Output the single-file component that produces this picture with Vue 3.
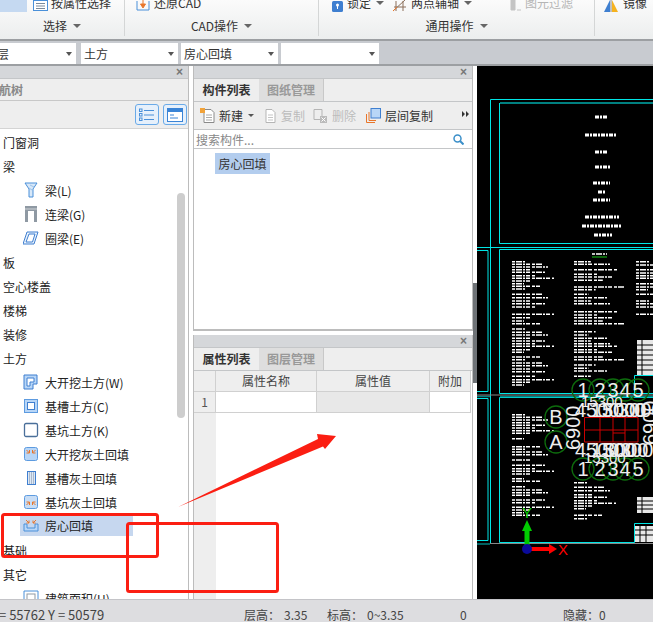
<template>
  <div class="app">
    <header class="ribbon">
      <section class="group g-select">
        <div class="group-top">
          <span class="sel-block"></span>
          <svg class="top-icon" width="15" height="12" viewBox="0 0 15 12"><rect x="0.5" y="0.5" width="14" height="10" fill="#fff" stroke="#4a90d9"/><path d="M3 3.5h9M3 6h9M3 8.5h9" stroke="#7a8a9a"/></svg>
          <span class="top-text">按属性选择</span>
        </div>
        <div class="group-label">选择<i class="caret"></i></div>
      </section>
      <section class="group g-cad">
        <div class="group-top">
          <svg class="top-icon" width="14" height="12" viewBox="0 0 14 12"><path d="M1 1v9h12V1" fill="none" stroke="#4a90d9"/><path d="M7 0v6M4.5 4L7 8l2.5-4z" fill="#e8762b" stroke="#e8762b"/></svg>
          <span class="top-text">还原CAD</span>
        </div>
        <div class="group-label">CAD操作<i class="caret"></i></div>
      </section>
      <section class="group g-common">
        <div class="group-top">
          <svg class="top-icon lock" width="11" height="11" viewBox="0 0 11 11"><rect width="11" height="11" rx="1.5" fill="#3f7fd0"/><circle cx="5.5" cy="4" r="1.5" fill="#fff"/><path d="M5.5 4v4" stroke="#fff"/></svg>
          <span class="top-text">锁定</span><i class="caret small"></i>
          <svg class="top-icon axis" width="15" height="13" viewBox="0 0 15 13"><path d="M1 12L13 1M4 12V2M11 12V2M2 8h12" fill="none" stroke="#8b6f5a"/><path d="M1 12l4-4" stroke="#e8762b"/></svg>
          <span class="top-text">两点辅轴</span><i class="caret small"></i>
          <svg class="top-icon filter" width="11" height="12" viewBox="0 0 11 12"><path d="M1 0h4v10H1zM7 10h4" fill="#c4c4c4" stroke="#c4c4c4"/></svg>
          <span class="top-text off">图元过滤</span>
        </div>
        <div class="group-label">通用操作<i class="caret"></i></div>
      </section>
      <section class="group g-mirror">
        <div class="group-top">
          <svg class="top-icon" width="15" height="12" viewBox="0 0 15 12"><path d="M6 0L0 12h6z" fill="#3f7fd0"/><path d="M8 0l6 12H8z" fill="#f5b21f"/><path d="M7 0v12" stroke="#888"/></svg>
          <span class="top-text">镜像</span>
        </div>
      </section>
    </header>

    <div class="selectors">
      <div v-for="c in combos" :key="c.cls" :class="['combo', c.cls]">
        <span>{{ c.text }}</span><i class="caret dark"></i>
      </div>
    </div>

    <main class="workspace">
      <aside class="nav-panel">
        <div class="panel-title"><span class="close">×</span></div>
        <div class="nav-head">航树</div>
        <div class="nav-tools">
          <button class="view-btn">
            <svg width="16" height="14" viewBox="0 0 16 14"><path d="M5 2.5h10M5 7h10M5 11.5h10" stroke="#4a90d9"/><rect x="0.5" y="1" width="2.5" height="2.5" fill="none" stroke="#4a90d9"/><rect x="0.5" y="5.5" width="2.5" height="2.5" fill="none" stroke="#4a90d9"/><rect x="0.5" y="10" width="2.5" height="2.5" fill="none" stroke="#4a90d9"/></svg>
          </button>
          <button class="view-btn">
            <svg width="16" height="14" viewBox="0 0 16 14"><rect x="0.5" y="0.5" width="15" height="13" fill="#fff" stroke="#3a84d6"/><rect x="0.5" y="0.5" width="15" height="3.5" fill="#3a84d6"/><path d="M3 7h4M3 10h8" stroke="#3a84d6"/></svg>
          </button>
        </div>
        <div class="tree">
          <div v-for="row in tree" :key="row.text" :class="['tree-row', { child: row.icon, picked: row.picked }]">
            <svg v-if="row.icon" class="tree-icon" width="16" height="16" viewBox="0 0 16 16" v-html="icons[row.icon]"></svg>
            <span class="tree-text">{{ row.text }}</span>
          </div>
          <span class="scroll-thumb"></span>
        </div>
      </aside>

      <div class="mid">
        <section class="panel list-panel">
          <div class="panel-title"><span class="close">×</span></div>
          <div class="tabs">
            <span class="tab active">构件列表</span>
            <span class="tab">图纸管理</span>
          </div>
          <div class="tools">
            <svg class="tool-icon" width="16" height="15" viewBox="0 0 16 15"><path d="M4 1.5h7l3 3v10H4z" fill="#fff" stroke="#8a8a8a"/><path d="M6 7h6M6 9.5h6M6 12h6" stroke="#aaa"/><rect x="0" y="0" width="5" height="5" fill="#f2a33a"/></svg>
            <span class="tool-text">新建</span><i class="caret dark tiny"></i>
            <svg class="tool-icon faded" width="13" height="14" viewBox="0 0 13 14"><path d="M3 .5h6l3 3v10H3z" fill="#fff" stroke="#b5b5b5"/><path d="M5 6h5M5 8.500h5M5 11h5" stroke="#c5c5c5"/></svg>
            <span class="tool-text off">复制</span>
            <svg class="tool-icon faded" width="14" height="14" viewBox="0 0 14 14"><path d="M1 .5h8v10H1z" fill="none" stroke="#b5b5b5"/><rect x="7" y="7" width="7" height="7" fill="#bbb"/><path d="M8.500 8.500l4 4m0-4l-4 4" stroke="#fff"/></svg>
            <span class="tool-text off wide">删除</span>
            <svg class="tool-icon copy" width="15" height="15" viewBox="0 0 15 15"><path d="M.5 6v8.500H9M3 4v8.500h7" fill="none" stroke="#e8762b"/><rect x="5" y=".5" width="9.500" height="9.500" fill="#b8d6f7" stroke="#3f7fd0"/></svg>
            <span class="tool-text">层间复制</span>
            <span class="more">
              <svg width="7" height="6" viewBox="0 0 7 6"><path d="M0 0l3 3-3 3zM4 0l3 3-3 3z" fill="#333"/></svg>
            </span>
          </div>
          <div class="search">
            <span>搜索构件...</span>
            <svg width="11" height="11" viewBox="0 0 11 11"><circle cx="4.500" cy="4.500" r="3.500" fill="none" stroke="#3b8fc9" stroke-width="1.500"/><path d="M7 7l3.500 3.500" stroke="#3b8fc9" stroke-width="2"/></svg>
          </div>
          <div class="list-body">
            <span class="list-item">房心回填</span>
          </div>
        </section>

        <section class="panel attr-panel">
          <div class="panel-title"><span class="close">×</span></div>
          <div class="tabs">
            <span class="tab active">属性列表</span>
            <span class="tab">图层管理</span>
          </div>
          <div class="attr-body">
            <div class="attr-grid">
              <div class="cell head"></div>
              <div class="cell head">属性名称</div>
              <div class="cell head">属性值</div>
              <div class="cell head">附加</div>
              <div class="cell head num">1</div>
              <div class="cell"></div>
              <div class="cell shade"></div>
              <div class="cell"></div>
            </div>
          </div>
        </section>
      </div>

      <div class="splitter"><span class="grip"></span></div>

      <svg class="canvas" width="176" height="533" viewBox="477 66 176 533">
        <rect x="477" y="66" width="176" height="533" fill="#000" />
        <g fill="none" stroke="#00e5e5">
          <path d="M490.500 99.500H653M490.500 99.500V543" />
          <path d="M499.500 103V243.500H653" />
          <path d="M477 247.500H653" />
          <path d="M477 250.500H488V391.500H477" />
          <path d="M653 249.500H499.500V393.500H653" />
          <path d="M477 398.500H488V540.500H477" />
          <path d="M653 397.500H499.500V542.500H634.500V523.500H653" />
          <path d="M634.500 393V375.500H653" />
        </g>
        <path d="M500 103H653" stroke="#008080" stroke-width="2" />
        <path d="M500 396.500H653M477 396.500H490M477 544H490" stroke="#008080" stroke-width="1.500" />
        <path d="M477 395H653M490 543.500H653" stroke="#888" stroke-width="1" />

        <g stroke="#fff" stroke-width="3" stroke-dasharray="4 1 2 1" fill="none">
          <path v-for="(b, i) in titleBlocks" :key="'b' + i" :d="b" />
        </g>
        <g stroke="#fff" stroke-width="1.500" stroke-dasharray="3 1 6 1 2 1 4 2" fill="none">
          <path v-for="(b, i) in noteBlocks" :key="'n' + i" :d="b" />
        </g>
        <path d="M592 257H607" stroke="#19c819" stroke-width="1" />

        <g fill="#e8e8e8">
          <rect v-for="(t, i) in tables" :key="'t' + i" :x="t[0]" :y="t[1]" :width="t[2]" :height="t[3]" />
        </g>
        <g stroke="#000" stroke-width="1">
          <path d="M637 345H653M637 350H653M637 355H653M637 360H653M637 365H653M637 370H653M642 340V375" />
          <path d="M637 501H653M637 505H653M637 509H653M642 497V513M635 530H653M635 535H653M640 526V542M646 526V542" />
        </g>

        <g fill="none" stroke="#cc0000" stroke-width="1">
          <path d="M584.500 417.500H638V442H584.500zM584.500 430H638M600 417.500V442M613 417.500V442M625 417.500V442M613 433H625" />
        </g>

        <g fill="none" stroke="#0d6b0d" stroke-width="1.300">
          <circle v-for="(c, i) in bubbles" :key="'c' + i" :cx="c[0]" :cy="c[1]" r="11" />
        </g>
        <g class="cad-text">
          <text v-for="(c, i) in bubbles" :key="'t' + i" :x="c[0]" :y="c[1] + 7" text-anchor="middle">{{ c[2] }}</text>
          <text x="575" y="417">4500</text>
          <text x="591" y="417">1500</text>
          <text x="602" y="417">3000</text>
          <text x="618" y="417">3000</text>
          <text x="634" y="417">0</text>
          <text x="581" y="407" class="mid-size">15300</text>
          <text x="575" y="457">4500</text>
          <text x="591" y="457">1500</text>
          <text x="604" y="457">3000</text>
          <text x="620" y="457">3000</text>
          <text x="584" y="463" class="mid-size">15300</text>
          <text x="0" y="0" transform="translate(580 450) rotate(-90)">6900</text>
          <text x="0" y="0" transform="translate(657 445) rotate(-90)">6900</text>
        </g>

        <path d="M530 549H550" stroke="#f00" stroke-width="4" />
        <path d="M549 544L557 549L549 554z" fill="#f00" />
        <path d="M527 546V530" stroke="#0c0" stroke-width="5" />
        <path d="M522 531L527 520L532 531z" fill="#0c0" />
        <circle cx="527" cy="549" r="5" fill="#0a0a9a" />
        <text x="522" y="518" class="axis-y">Y</text>
        <text x="558" y="555" class="axis-x">X</text>
      </svg>
    </main>

    <footer class="status">
      <span class="s-pos">= 55762 Y = 50579</span>
      <span class="s-a">层高：</span>
      <span class="s-b">3.35</span>
      <span class="s-c">标高：</span>
      <span class="s-d">0~3.35</span>
      <span class="s-e">0</span>
      <span class="s-f">隐藏：0</span>
    </footer>

    <svg class="marks" width="653" height="622" viewBox="0 0 653 622">
      <g fill="none" stroke="#fb1e12" stroke-width="3" stroke-linejoin="round">
        <rect x="2.500" y="514.500" width="155" height="42" rx="2" />
        <rect x="127.500" y="523.500" width="150" height="68" rx="2" />
      </g>
      <polygon points="178,507 318,439 317,434 336,436 325,449 323,446.500" fill="#fb1e12" />
    </svg>
  </div>
</template>

<script setup>
const combos = [
  { cls: 'c1', text: '层' },
  { cls: 'c2', text: '土方' },
  { cls: 'c3', text: '房心回填' },
  { cls: 'c4', text: '' },
]

const tree = [
  { text: '门窗洞' },
  { text: '梁' },
  { text: '梁(L)', icon: 'beam' },
  { text: '连梁(G)', icon: 'lintel' },
  { text: '圈梁(E)', icon: 'ring' },
  { text: '板' },
  { text: '空心楼盖' },
  { text: '楼梯' },
  { text: '装修' },
  { text: '土方' },
  { text: '大开挖土方(W)', icon: 'dig' },
  { text: '基槽土方(C)', icon: 'trench' },
  { text: '基坑土方(K)', icon: 'pit' },
  { text: '大开挖灰土回填', icon: 'fillDown' },
  { text: '基槽灰土回填', icon: 'dots' },
  { text: '基坑灰土回填', icon: 'fillUp' },
  { text: '房心回填', icon: 'tray', picked: true },
  { text: '基础' },
  { text: '其它' },
  { text: '建筑面积(U)', icon: 'area' },
]

const icons = {
  beam: '<path d="M2 1h12L10 7v8H6V7z" fill="#d8e8f8" stroke="#4a90d9"/><path d="M7 3l4 2M6 6l3 2" stroke="#9cc2ea"/>',
  lintel: '<path d="M2 0h12v16h-3V5H5v11H2z" fill="#8f99a3"/><path d="M2 3h12" stroke="#d0d4d8"/>',
  ring: '<path d="M4 2h11l-4 12H0z" fill="#eaf3fc" stroke="#3f7fd0"/><path d="M6 4h6l-2.500 8H3z" fill="#fff" stroke="#3f7fd0"/>',
  dig: '<path d="M1 1h13v9h-4v5H1z" fill="#b8d6f7" stroke="#3f7fd0"/><path d="M4 4h7v4H7v4H4z" fill="#fff" stroke="#3f7fd0"/>',
  trench: '<rect x="1.500" y="1.500" width="13" height="13" fill="#b8d6f7" stroke="#5d9be0"/><rect x="4.500" y="4.500" width="7" height="7" fill="#fff" stroke="#3f7fd0"/>',
  pit: '<rect x="1.500" y="1.500" width="13" height="13" rx="1.500" fill="#fff" stroke="#4a6f9a" stroke-width="1.300"/>',
  fillDown: '<rect x="1.500" y="1.500" width="13" height="13" rx="2" fill="#b8d6f7" stroke="#5d9be0"/><path d="M3.500 4l3 3m0-3v3h-3M12.500 4l-3 3m0-3v3h3" fill="none" stroke="#e8762b"/>',
  dots: '<rect x="4.500" y="1.500" width="8" height="13" fill="#dce8f6" stroke="#3f7fd0"/><path d="M6 3h5M6 5h5M6 7h5M6 9h5M6 11h5M6 13h5" stroke="#7a8aa0" stroke-dasharray="1 1"/>',
  fillUp: '<rect x="1.500" y="1.500" width="13" height="13" rx="2" fill="#c8ddf5" stroke="#5d9be0"/><path d="M3.500 11l3-3m0 3V8h-3M12.500 11l-3-3m0 3V8h3" fill="none" stroke="#e8762b"/>',
  tray: '<path d="M1 6v7h14V6h-3v4H4V6z" fill="#b8d6f7" stroke="#4a90d9"/><path d="M3 2l3 3m0-2.500V5H3.500M13 2l-3 3m0-2.500V5h2.500" fill="none" stroke="#e8762b"/>',
  area: '<path d="M1 1h14M1 1v14M15 1v14" fill="none" stroke="#4a90d9"/><rect x="4" y="4" width="8" height="8" fill="none" stroke="#8f99a3"/>',
}

// title sheet lines, then the note columns of the two sheets below
const titleBlocks = [
  [595, 117, 13], [585, 135, 32], [595, 152, 13], [595, 167, 16], [593, 183, 17],
  [598, 192, 8], [593, 200, 17], [585, 217, 34], [582, 226, 40], [594, 235, 18],
].map(([x, y, w]) => `M${x} ${y}h${w}`)

const sheet2Left = [50, 58, 66, 74, 82, 92, 100, 108, 116, 124, 132, 148, 158, 168, 176, 186, 208, 218, 228, 236, 252, 262, 270, 280, 288, 296, 304, 314, 322, 336, 344, 354, 362, 372, 380, 394, 404, 412, 420]
const sheet2Mid = [50, 58, 74, 88, 96, 106, 126, 134, 148, 158, 168, 176, 200, 210, 218, 228, 236, 260, 270, 280, 288, 296, 304, 314, 322, 336, 344, 360, 370, 378, 394]
const sheet2Right = [50, 60, 74, 84, 92, 100, 116, 126, 134, 148, 168, 176, 186, 208]
const sheet3Left = [104, 112, 120, 128, 136, 144, 152, 160, 176, 200, 208, 216, 224, 240, 256, 266, 274, 282, 296, 304, 320, 330, 338, 346, 360, 368, 382, 390, 398, 406]
const sheet3Mid = [308, 322, 332, 344, 352, 362, 370, 378, 386, 406, 416]

const widths = [14, 30, 36, 20, 33, 24, 42, 18, 12, 28]
const noteBlocks = ['M592 254h15']
function addColumn(rows, x, top, scale) {
  rows.forEach((r, i) => {
    noteBlocks.push(`M${x} ${top + r / 3}h${widths[i % widths.length] * scale}`)
  })
}
addColumn(sheet2Left, 512, 245, 1)
addColumn(sheet2Mid, 574, 245, 1.200)
addColumn(sheet2Right, 636, 245, 1)
addColumn(sheet3Left, 512, 380, 1)
addColumn(sheet3Mid, 574, 380, 1)

const tables = [
  [637, 340, 16, 35],
  [637, 497, 16, 16],
  [635, 526, 18, 16],
]

const bubbles = [
  [583, 390, '1'], [600, 390, '2'], [613, 390, '3'], [625, 390, '4'], [638, 390, '5'],
  [583, 469, '1'], [600, 469, '2'], [613, 469, '3'], [625, 469, '4'], [638, 469, '5'],
  [556, 417, 'B'], [556, 442, 'A'],
]
</script>

<style>
html, body { margin: 0; overflow: hidden; background: #fff; }
</style>

<style scoped>
.app {
  position: relative;
  width: 653px;
  height: 622px;
  overflow: hidden;
  display: flex;
  flex-direction: column;
  font-family: "Noto Sans CJK SC", "Noto Sans", sans-serif;
  font-size: 12px;
  color: #333;
  background: #fff;
}

/* ribbon */
.ribbon {
  display: flex;
  height: 39px;
  flex: none;
  background: linear-gradient(#fbfbfb, #eceeee);
  border-bottom: 2px solid #9c9fa2;
  box-sizing: content-box;
}
.group {
  display: flex;
  flex-direction: column;
  height: 36px;
  box-sizing: border-box;
  border-right: 1px solid #d4d6d6;
}
.g-select { width: 125px; }
.g-cad { width: 194px; }
.g-common { width: 276px; }
.g-mirror { flex: 1; border-right: none; }
.group-top {
  display: flex;
  align-items: flex-end;
  height: 12px;
  overflow: hidden;
}
.sel-block {
  width: 27px;
  height: 14px;
  background: #c5d9f1;
  margin-right: 6px;
  flex: none;
}
.top-icon { flex: none; }
.top-text {
  flex: none;
  line-height: 18px;
  margin-left: 4px;
  white-space: nowrap;
  font-size: 12px;
}
.top-text.off { color: #b5b5b5; }
.g-select .top-text { margin-left: 3px; }
.g-cad .group-top { padding-left: 11px; }
.g-common .group-top { padding-left: 13px; }
.g-common .axis { margin-left: 8px; }
.g-common .filter { margin-left: 38px; }
.g-mirror .group-top { padding-left: 9px; }
.group-label {
  height: 20px;
  margin-top: 4px;
  display: flex;
  justify-content: center;
  align-items: center;
  font-size: 12px;
  line-height: 20px;
}
.caret {
  display: inline-block;
  width: 0;
  height: 0;
  margin-left: 6px;
  border-left: 4px solid transparent;
  border-right: 4px solid transparent;
  border-top: 4px solid #666;
}
.caret.small { margin: 0 0 7px 5px; }
.caret.dark { border-left-width: 3.500px; border-right-width: 3.500px; border-top-color: #555; }
.caret.tiny { margin: 0 9px 0 -3px; border-top-width: 3px; border-left-width: 3px; border-right-width: 3px; }

/* selector row */
.selectors {
  display: flex;
  flex: none;
  height: 25px;
  box-sizing: border-box;
  padding: 2px 0 0;
  background: #c8cbd0;
  border-bottom: 2px solid #9c9fa2;
}
.combo {
  height: 21px;
  background: #fff;
  display: flex;
  justify-content: space-between;
  align-items: center;
  box-sizing: border-box;
  padding: 0 4px;
  margin-right: 3px;
  font-size: 12px;
  flex: none;
}
.c1 { width: 79px; padding-left: 0; margin-left: -3px; margin-right: 5px; }
.c2 { width: 97px; padding-left: 3px; }
.c3 { width: 97px; padding-left: 3px; }
.c4 { width: 98px; }

/* panels */
.workspace {
  flex: none;
  display: flex;
  height: 533px;
  background: #fff;
}
.panel-title {
  height: 12px;
  background: #d5d7da;
  border-bottom: 1px solid #c4c6c8;
  position: relative;
  flex: none;
}
.close {
  position: absolute;
  right: 5px;
  top: -2px;
  font: bold 12px/16px "Liberation Sans", sans-serif;
  color: #777;
}
.nav-panel {
  width: 189px;
  flex: none;
  display: flex;
  flex-direction: column;
  border-right: 1px solid #bcbcbc;
  box-sizing: border-box;
  overflow: hidden;
}
.nav-head {
  height: 21px;
  flex: none;
  background: #eee;
  border-bottom: 1px solid #c8c8c8;
  margin-left: -1px;
  line-height: 21px;
  font-weight: 700;
  color: #888;
  font-size: 12px;
}
.nav-tools {
  height: 27px;
  flex: none;
  display: flex;
  justify-content: flex-end;
  align-items: center;
  gap: 4px;
  padding-right: 1px;
  background: #eee;
  border-bottom: 1px solid #d4d4d4;
}
.view-btn {
  width: 24px;
  height: 21px;
  padding: 0;
  background: #e6f0fb;
  border: 1px solid #6aaae8;
  border-radius: 3px;
  display: flex;
  align-items: center;
  justify-content: center;
}
.tree {
  position: relative;
  padding-top: 1px;
  flex: 1;
}
.tree-row {
  height: 24px;
  display: flex;
  align-items: center;
  padding-left: 3px;
  font-size: 12px;
  color: #222;
  white-space: nowrap;
}
.tree-row.child { padding-left: 23px; }
.tree-row.picked {
  margin-left: 20px;
  padding-left: 3px;
  width: 113px;
  height: 21px;
  margin-top: 1px;
  margin-bottom: 2px;
  box-sizing: border-box;
  background: #c6d7ef;
}
.tree-icon { flex: none; margin-right: 6px; }
.scroll-thumb {
  position: absolute;
  left: 177px;
  top: 64px;
  width: 8px;
  height: 225px;
  border-radius: 4px;
  background: #cdcdcd;
}

.mid {
  width: 280px;
  flex: none;
  margin-left: 4px;
  display: flex;
  flex-direction: column;
}
.panel {
  display: flex;
  flex-direction: column;
  border-left: 1px solid #bcbcbc;
  border-right: 1px solid #bcbcbc;
  box-sizing: border-box;
}
.list-panel {
  height: 265px;
  flex: none;
  border-bottom: 2px solid #bcbcbc;
}
.attr-panel {
  flex: 1;
  margin-top: 4px;
  min-height: 0;
}
.tabs {
  height: 22px;
  flex: none;
  display: flex;
  background: #eee;
  border-bottom: 1px solid #c4c6c8;
}
.tab {
  width: 65px;
  box-sizing: border-box;
  text-align: center;
  line-height: 22px;
  height: 22px;
  font-weight: 700;
  font-size: 12px;
  color: #999;
  background: #dedede;
  border-right: 1px solid #c8c8c8;
}
.tab.active { color: #333; background: #eee; border-right: none; }
.tools {
  height: 28px;
  flex: none;
  display: flex;
  align-items: center;
  padding-left: 6px;
  background: #eee;
  border-bottom: 1px solid #c4c6c8;
  box-sizing: border-box;
  position: relative;
}
.tool-icon { flex: none; margin-right: 3px; }
.tool-icon.faded { margin-right: 5px; }
.tool-icon.copy { margin-right: 4px; }
.tool-text { font-size: 12px; margin-right: 8px; white-space: nowrap; }
.tool-text.off { color: #bcbcbc; }
.tool-text.wide { margin-right: 10px; }
.more {
  position: absolute;
  right: 3px;
  top: 9px;
  line-height: 0;
}
.search {
  height: 19px;
  flex: none;
  display: flex;
  justify-content: space-between;
  align-items: center;
  padding: 0 8px 0 2px;
  color: #888;
  border-bottom: 1px solid #c4c6c8;
  box-sizing: border-box;
}
.list-body { flex: 1; padding: 4px 0 0 21px; }
.list-item {
  display: inline-block;
  width: 55px;
  height: 21px;
  line-height: 21px;
  text-align: center;
  font-size: 12px;
  background: #b3cdee;
}
.attr-body {
  flex: 1;
  background: linear-gradient(to right, #eee 22px, #fff 22px);
  min-height: 0;
}
.attr-grid {
  display: grid;
  grid-template-columns: 22px 101px 113px 41px;
  grid-auto-rows: 21px;
}
.cell {
  box-sizing: border-box;
  border-right: 1px solid #d0d0d0;
  border-bottom: 1px solid #d0d0d0;
  background: #fff;
}
.cell.head {
  background: #eee;
  text-align: center;
  line-height: 20px;
  color: #444;
}
.cell.num { color: #555; font-size: 12px; }
.cell.shade { background: #e8e8e8; }

.splitter {
  width: 4px;
  flex: none;
  position: relative;
}
.grip {
  position: absolute;
  left: 0;
  top: 217px;
  width: 4px;
  height: 100px;
  background: #6f7377;
}
.canvas { display: block; flex: none; }
.cad-text text {
  font-family: "Liberation Sans", sans-serif;
  font-size: 20px;
  fill: #eee;
  font-weight: 400;
}
.cad-text .mid-size { font-size: 15px; }
.axis-y { font: 15px "Liberation Sans", sans-serif; fill: #0c0; }
.axis-x { font: 15px "Liberation Sans", sans-serif; fill: #f00; }

/* status */
.status {
  flex: 1;
  position: relative;
  display: flex;
  align-items: center;
  background: #dddde0;
  border-top: 1px solid #c4c4c8;
  font-size: 12px;
  color: #444;
  white-space: nowrap;
  padding-top: 5px;
  box-sizing: border-box;
}
.s-pos { margin-left: -1px; width: 245px; flex: none; font-size: 13px; }
.s-a { width: 40px; flex: none; }
.s-b { width: 43px; flex: none; }
.s-c { width: 40px; flex: none; }
.s-d { width: 93px; flex: none; }
.s-e { width: 103px; flex: none; }

.marks {
  position: absolute;
  left: 0;
  top: 0;
  pointer-events: none;
}
</style>
